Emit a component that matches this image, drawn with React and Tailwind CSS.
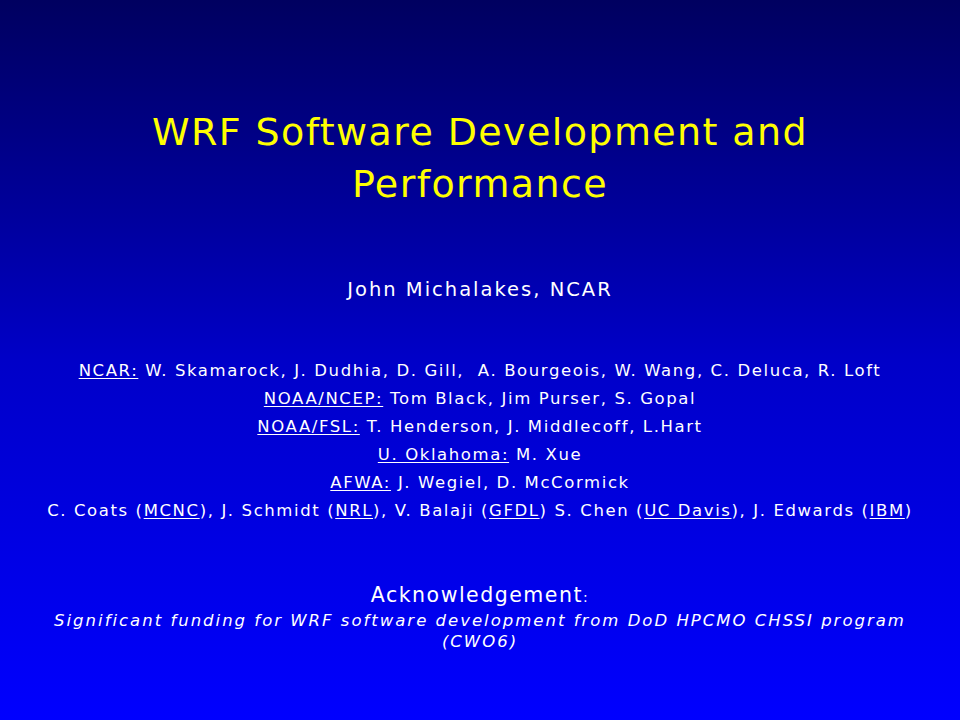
const credits = [
  [["NCAR:", true], [" W. Skamarock, J. Dudhia, D. Gill,  A. Bourgeois, W. Wang, C. Deluca, R. Loft", false]],
  [["NOAA/NCEP:", true], [" Tom Black, Jim Purser, S. Gopal", false]],
  [["NOAA/FSL:", true], [" T. Henderson, J. Middlecoff, L.Hart", false]],
  [["U. Oklahoma:", true], [" M. Xue", false]],
  [["AFWA:", true], [" J. Wegiel, D. McCormick", false]],
  [
    ["C. Coats (", false], ["MCNC", true], ["), J. Schmidt (", false], ["NRL", true],
    ["), V. Balaji (", false], ["GFDL", true], [") S. Chen (", false], ["UC Davis", true],
    ["), J. Edwards (", false], ["IBM", true], [")", false],
  ],
];

export default function App() {
  return (
    <div
      className="w-[960px] h-[720px] flex flex-col items-center text-white text-center bg-gradient-to-b from-[#000060] via-[#0000c8] to-[#0000ff]"
      style={{ fontFamily: '"DejaVu Sans", Verdana, sans-serif' }}
    >
      <h1 className="mt-[106px] text-[38px] leading-[52px] tracking-[1.4px] text-[#ffff00] w-[760px]">
        WRF Software Development and Performance
      </h1>
      <p className="mt-[67px] text-[19.5px] leading-[26px] tracking-[2px]">John Michalakes, NCAR</p>
      <div className="mt-[54px] flex flex-col text-[16.5px] leading-[28px] tracking-[1.6px] whitespace-pre">
        {credits.map((line, i) => (
          <div key={i}>
            {line.map(([t, u], j) => (
              <span key={j} className={u ? "underline underline-offset-2" : ""}>{t}</span>
            ))}
          </div>
        ))}
      </div>
      <p className="mt-[57px] text-[20.5px] leading-[26px] tracking-[1.5px]">
        Acknowledgement<span className="text-[14px]">:</span>
      </p>
      <p className="italic text-[16.5px] leading-[21px] tracking-[2px] w-[900px]">
        Significant funding for WRF software development from DoD HPCMO CHSSI program (CWO6)
      </p>
    </div>
  );
}
